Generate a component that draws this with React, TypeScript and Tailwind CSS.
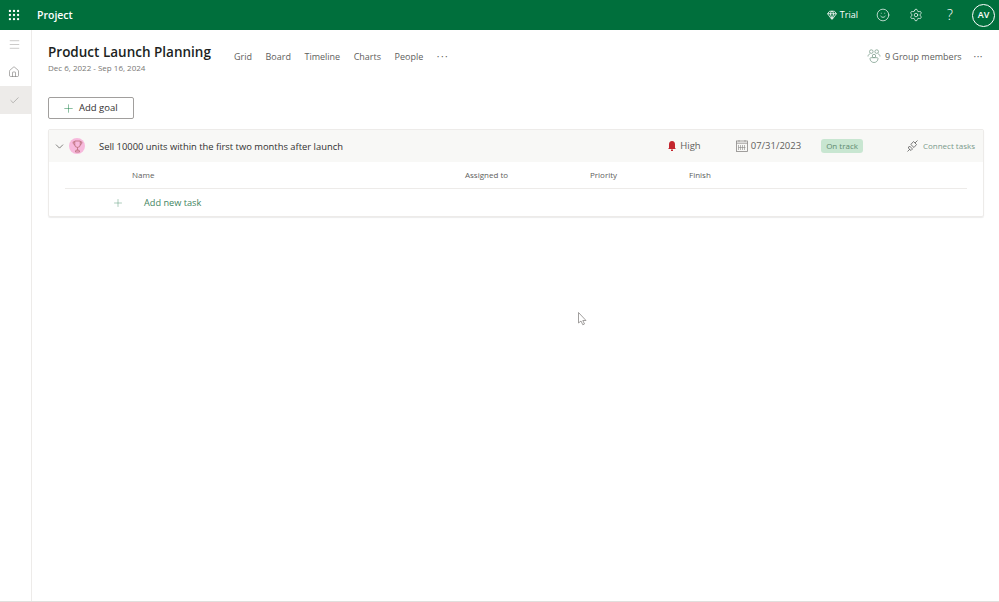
import { ChevronDown, Check, Home, Plus, Settings, Smile, Gem, Menu, Grip } from 'lucide-react';

const tabs = ['Grid', 'Board', 'Timeline', 'Charts', 'People'];

function Trophy() {
  return (
    <svg width="11" height="13" viewBox="0 0 12 14" fill="none" stroke="#b3666d" strokeWidth="0.8">
      <path d="M3 1h6v4a3 3 0 0 1-6 0z" />
      <path d="M3 2H1.200c0 2 .6 3 2 3.400M9 2h1.800c0 2-.6 3-2 3.400M6 8v3M3.800 13h4.400l-.5-2H4.300z" />
    </svg>
  );
}

function Members() {
  return (
    <svg width="14" height="14" viewBox="0 0 14 14" fill="none" stroke="#7f9f8e" strokeWidth="0.8">
      <circle cx="4.300" cy="2.600" r="1.800" />
      <circle cx="9.700" cy="2.600" r="1.800" />
      <circle cx="7" cy="7" r="1.700" />
      <path d="M1 7.500c0-1.500 1-2.500 2-2.500M13 7.500c0-1.500-1-2.500-2-2.500M3 9.500c0 2.500 2 4 4 4s4-1.500 4-4c0-.5-.5-.8-1-.8H4c-.5 0-1 .3-1 .8z" />
    </svg>
  );
}

function Calendar() {
  return (
    <svg width="12" height="12" viewBox="0 0 12 12" fill="none" stroke="#8a8886" strokeWidth="0.8">
      <rect x="0.500" y="1" width="11" height="10.500" />
      <path d="M.5 3.200h11M3 .2v1.500M9 .2v1.500" />
      <path d="M2.500 5v5M4.500 5v5M6.500 5v5M8.500 5v5M2.500 7.500h7" strokeWidth="0.6" />
    </svg>
  );
}

function Link() {
  return (
    <svg width="11" height="12" viewBox="0 0 11 12" fill="none" stroke="#5c5c5c" strokeWidth="0.8">
      <path d="M.5 11.500 3 9M8 3l2.500-2.500" />
      <path d="M6.500 1.500 9.500 4.500 7 7.500 3.800 4.500z" />
      <path d="M2.500 6 5.500 9 4 10.500 1.200 8z" />
    </svg>
  );
}

export default function App() {
  return (
    <div className="relative flex h-[602px] w-[999px] flex-col overflow-hidden bg-white font-['Open_Sans','Noto_Sans',sans-serif] text-[#323130]">
      <header className="flex h-[30px] shrink-0 items-center bg-[#006f3c] text-white">
        <div className="flex w-[28px] justify-center">
          <Grip size={14} strokeWidth={2} />
        </div>
        <span className="ml-[9px] mt-[1px] text-[10.500px] font-semibold">Project</span>
        <div className="ml-auto flex items-center">
          <Gem size={10} className="mr-[3px]" />
          <span className="text-[9px] font-medium">Trial</span>
          <Smile size={14} strokeWidth={1.200} className="ml-[18px]" />
          <Settings size={14} strokeWidth={1.200} className="ml-[19px]" />
          <span className="ml-[23px] w-[8px] text-center text-[14px] font-light leading-none">?</span>
          <div className="ml-[18px] mr-[4px] flex h-[23px] w-[23px] items-center justify-center rounded-full border border-white text-[9px] font-semibold">
            AV
          </div>
        </div>
      </header>

      <div className="flex min-h-0 flex-1 border-b border-[#e1dfdd]">
        <aside className="flex w-[32px] shrink-0 flex-col items-center border-r border-[#edebe9] pt-[8px] text-[#797775]">
          <Menu size={13} strokeWidth={1} className="-ml-[3px] text-[#a19f9d]" />
          <div className="mt-[7px] flex h-[28px] w-full items-center justify-center">
            <Home size={12} strokeWidth={1.200} className="-ml-[3px]" />
          </div>
          <div className="flex h-[28px] w-full items-center justify-center bg-[#edebe9]">
            <Check size={11} strokeWidth={1.200} className="-ml-[3px] text-[#8a8886]" />
          </div>
        </aside>

        <main className="min-w-0 flex-1 pl-[16px] pr-[15px]">
          <div className="flex items-start pt-[13px]">
            <div className="w-[186px]">
              <div className="text-[13.500px] font-semibold leading-[18px] text-[#201f1e]">Product Launch Planning</div>
              <div className="mt-[1px] text-[8px] leading-[11px] text-[#797775]">Dec 6, 2022 - Sep 16, 2024</div>
            </div>
            <nav className="flex items-center gap-[13.500px] pt-[7px] text-[9px] leading-[13px] text-[#605e5c]">
              {tabs.map((t) => (
                <span key={t}>{t}</span>
              ))}
              <span className="text-[10px] tracking-[1.500px]">···</span>
            </nav>
            <div className="ml-auto flex items-center pt-[6px] text-[9px] leading-[13px] text-[#605e5c]">
              <Members />
              <span className="ml-[4px]">9 Group members</span>
              <span className="ml-[12px] mr-[1px] text-[10px] tracking-[0.500px]">···</span>
            </div>
          </div>

          <button className="mt-[24px] flex h-[22px] w-[86px] items-center rounded-[2px] border border-[#a19f9d] pl-[13px] text-[9.500px] text-[#323130]">
            <Plus size={13} strokeWidth={0.900} className="text-[#107c41]" />
            <span className="ml-[4px]">Add goal</span>
          </button>

          <section className="mt-[10px] rounded-[2px] border border-[#edebe9] shadow-[0_1px_1px_rgba(0,0,0,0.08)]">
            <div className="flex h-[32px] items-center bg-[#f8f8f6] pl-[4px]">
              <ChevronDown size={13} strokeWidth={1.100} />
              <div className="ml-[3px] flex h-[16px] w-[16px] items-center justify-center rounded-full bg-[#f7b9dc]">
                <Trophy />
              </div>
              <span className="ml-[14px] mt-[2px] text-[9.400px]">Sell 10000 units within the first two months after launch</span>
              <div className="ml-auto flex items-center text-[9.500px]">
                <svg width="8" height="10" viewBox="0 0 8 10" fill="#c4262e">
                  <path d="M4 0c2 0 3 1.500 3 3.500V7l1 1H0l1-1V3.500C1 1.500 2 0 4 0zM3 8.500h2V10H3z" />
                </svg>
                <span className="ml-[4px] text-[#605e5c]">High</span>
                <span className="ml-[35px]"><Calendar /></span>
                <span className="ml-[3px] text-[#605e5c]">07/31/2023</span>
                <span className="ml-[20px] flex h-[14px] items-center rounded-[3px] bg-[#c8e6d1] px-[5px] text-[8px] text-[#5f8a70]">On track</span>
                <span className="ml-[44px]"><Link /></span>
                <span className="ml-[5px] mr-[8px] text-[8px] text-[#7a9a8b]">Connect tasks</span>
              </div>
            </div>
            <div className="mx-[16px] flex h-[27px] items-center border-b border-[#edebe9] text-[8px] text-[#605e5c]">
              <span className="ml-[67px] w-[333px]">Name</span>
              <span className="w-[125px]">Assigned to</span>
              <span className="w-[99px]">Priority</span>
              <span>Finish</span>
            </div>
            <div className="flex h-[27px] items-center pl-[63px] pt-[1px] text-[9.200px] text-[#3f8562]">
              <Plus size={12} strokeWidth={1} className="text-[#5a9a78]" />
              <span className="ml-[20px]">Add new task</span>
            </div>
          </section>
        </main>
      </div>

      <svg className="absolute left-[578px] top-[312px]" width="9" height="14" viewBox="0 0 9 14" fill="#fff" stroke="#8a8886" strokeWidth="0.8">
        <path d="M.5.500v10.500l2.500-2 1.800 3.800 1.700-.8L4.800 8.500H8z" />
      </svg>
    </div>
  );
}
